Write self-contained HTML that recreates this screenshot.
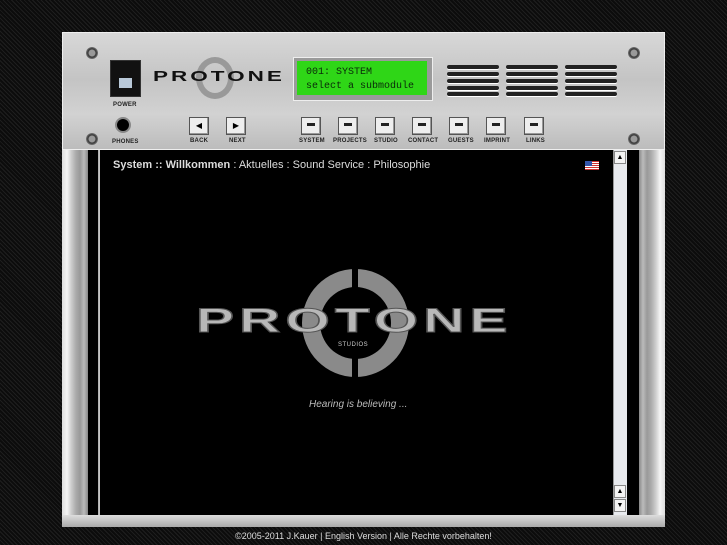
<!DOCTYPE html>
<html><head><style>
body{margin:0;width:727px;height:545px;overflow:hidden;background:#111;background-image:repeating-linear-gradient(45deg,#1e1e1e 0 1px,#0c0c0c 1px 3px);font-family:"Liberation Sans",sans-serif;position:relative}
.a{position:absolute}
.rail{background:linear-gradient(90deg,#ddd 0,#f4f4f4 5px,#cfcfcf 9px,#aaa 14px,#999 18px,#bbb 22px,#888 26px,#000 26px,#000 36px,#aaa 36px,#ccc 38px)}
.railr{background:linear-gradient(270deg,#ddd 0,#f4f4f4 5px,#cfcfcf 9px,#aaa 14px,#999 18px,#bbb 22px,#888 26px,#000 26px)}
.panel{background:linear-gradient(180deg,#d8d8d8,#c4c4c4 40%,#d2d2d2 70%,#bcbcbc);}
.btn{position:absolute;width:18px;height:16px;background:#eee;border:1px solid #555;box-shadow:inset -1px -1px 0 #999}
.btn i{position:absolute;left:5px;top:5px;width:8px;height:3px;background:#222}
.lbl{position:absolute;font-size:6px;font-weight:bold;color:#222;letter-spacing:.2px;white-space:nowrap}
.screw{position:absolute;width:12px;height:12px;border-radius:50%;background:radial-gradient(circle,#999 0 3px,#333 4px,#777 6px)}
.vent{position:absolute;width:52px;height:4px;background:#222;border-radius:2px;box-shadow:0 1px 0 #fff}
</style></head><body>
<div class="a rail" style="left:62px;top:32px;width:38px;height:495px"></div>
<div class="a railr" style="left:627px;top:32px;width:38px;height:495px"></div>
<div class="a panel" style="left:62px;top:32px;width:603px;height:118px;border:1px solid #eee;box-sizing:border-box"></div>
<div class="a" style="left:62px;top:515px;width:603px;height:12px;background:linear-gradient(#ddd,#aaa)"></div>
<div class="a" style="left:100px;top:150px;width:513px;height:365px;background:#000"></div>
<div class="a" style="left:613px;top:150px;width:14px;height:365px;background:#e8eaee;border-left:1px solid #999;box-sizing:border-box"></div>
<div class="a" style="left:614px;top:151px;width:12px;height:13px;background:#f4f4f4;border:1px solid #888;box-sizing:border-box;font-size:7px;text-align:center;line-height:11px">▲</div>
<div class="a" style="left:614px;top:485px;width:12px;height:13px;background:#f4f4f4;border:1px solid #888;box-sizing:border-box;font-size:7px;text-align:center;line-height:11px">▲</div>
<div class="a" style="left:614px;top:499px;width:12px;height:13px;background:#f4f4f4;border:1px solid #888;box-sizing:border-box;font-size:7px;text-align:center;line-height:11px">▼</div>
<div class="screw" style="left:86px;top:47px"></div><div class="screw" style="left:86px;top:133px"></div>
<div class="screw" style="left:628px;top:47px"></div><div class="screw" style="left:628px;top:133px"></div>
<div class="a" style="left:110px;top:60px;width:29px;height:35px;background:#111;border:1px solid #333"><div class="a" style="left:8px;top:17px;width:13px;height:10px;background:#b8c8d8"></div></div>
<div class="lbl" style="left:113px;top:102px">POWER</div>
<div class="a" style="left:115px;top:117px;width:16px;height:16px;border-radius:50%;background:#000;border:2px solid #888;box-sizing:border-box"></div>
<div class="lbl" style="left:112px;top:139px">PHONES</div>
<div class="a" style="left:196px;top:57px;width:38px;height:42px;border-radius:50%;border:6px solid #999;box-sizing:border-box"></div>
<div class="a" style="left:153px;top:68px;font:bold 15px 'Liberation Sans',sans-serif;letter-spacing:2px;color:#111;transform:scaleX(1.5);transform-origin:left">PROTONE</div>
<div class="a" style="left:293px;top:57px;width:138px;height:42px;background:#9a9a9a;border:1px solid #eee"><div class="a" style="left:3px;top:3px;width:130px;height:34px;background:#2fd617;font:10px 'Liberation Mono',monospace;color:#0a2a0a;padding:5px 0 0 9px;box-sizing:border-box;line-height:14px">001: SYSTEM<br>select a submodule</div></div>
<div class="vent" style="left:447px;top:65px"></div><div class="vent" style="left:447px;top:72px"></div><div class="vent" style="left:447px;top:79px"></div><div class="vent" style="left:447px;top:86px"></div><div class="vent" style="left:447px;top:92px"></div>
<div class="vent" style="left:506px;top:65px"></div><div class="vent" style="left:506px;top:72px"></div><div class="vent" style="left:506px;top:79px"></div><div class="vent" style="left:506px;top:86px"></div><div class="vent" style="left:506px;top:92px"></div>
<div class="vent" style="left:565px;top:65px"></div><div class="vent" style="left:565px;top:72px"></div><div class="vent" style="left:565px;top:79px"></div><div class="vent" style="left:565px;top:86px"></div><div class="vent" style="left:565px;top:92px"></div>
<div class="btn" style="left:189px;top:117px;font-size:8px;text-align:center;line-height:16px">◀</div><div class="lbl" style="left:190px;top:138px">BACK</div>
<div class="btn" style="left:226px;top:117px;font-size:8px;text-align:center;line-height:16px">▶</div><div class="lbl" style="left:229px;top:138px">NEXT</div>
<div class="btn" style="left:301px;top:117px"><i></i></div><div class="lbl" style="left:299px;top:138px">SYSTEM</div>
<div class="btn" style="left:338px;top:117px"><i></i></div><div class="lbl" style="left:333px;top:138px">PROJECTS</div>
<div class="btn" style="left:375px;top:117px"><i></i></div><div class="lbl" style="left:374px;top:138px">STUDIO</div>
<div class="btn" style="left:412px;top:117px"><i></i></div><div class="lbl" style="left:408px;top:138px">CONTACT</div>
<div class="btn" style="left:449px;top:117px"><i></i></div><div class="lbl" style="left:448px;top:138px">GUESTS</div>
<div class="btn" style="left:486px;top:117px"><i></i></div><div class="lbl" style="left:484px;top:138px">IMPRINT</div>
<div class="btn" style="left:524px;top:117px"><i></i></div><div class="lbl" style="left:526px;top:138px">LINKS</div>
<div class="a" style="left:113px;top:159px;font-size:11px;color:#ddd"><b>System :: Willkommen</b> : Aktuelles : Sound Service : Philosophie</div>
<div class="a" style="left:585px;top:161px;width:14px;height:9px;background:repeating-linear-gradient(#c33 0 1px,#fff 1px 2px)"><div style="width:7px;height:5px;background:#35a"></div></div>
<div class="a" style="left:302px;top:269px;width:107px;height:108px;border-radius:50%;border:18px solid #8a8a8a;box-sizing:border-box;background:#000"></div>
<div class="a" style="left:352px;top:266px;width:6px;height:114px;background:#000"></div>
<div class="a" style="left:196px;top:302px;font:bold 34px 'Liberation Sans',sans-serif;color:#b8b8b8;letter-spacing:3px;transform:scaleX(1.68);transform-origin:left;-webkit-text-stroke:1px #555">PROTONE</div>
<div class="a" style="left:338px;top:342px;font-size:6px;color:#ccc;letter-spacing:.5px">STUDIOS</div>
<div class="a" style="left:309px;top:399px;font-size:10px;font-style:italic;color:#bbb">Hearing is believing ...</div>
<div class="a" style="left:0;width:727px;top:531px;text-align:center;font-size:9px;color:#ddd">©2005-2011 J.Kauer | English Version | Alle Rechte vorbehalten!</div>
</body></html>
